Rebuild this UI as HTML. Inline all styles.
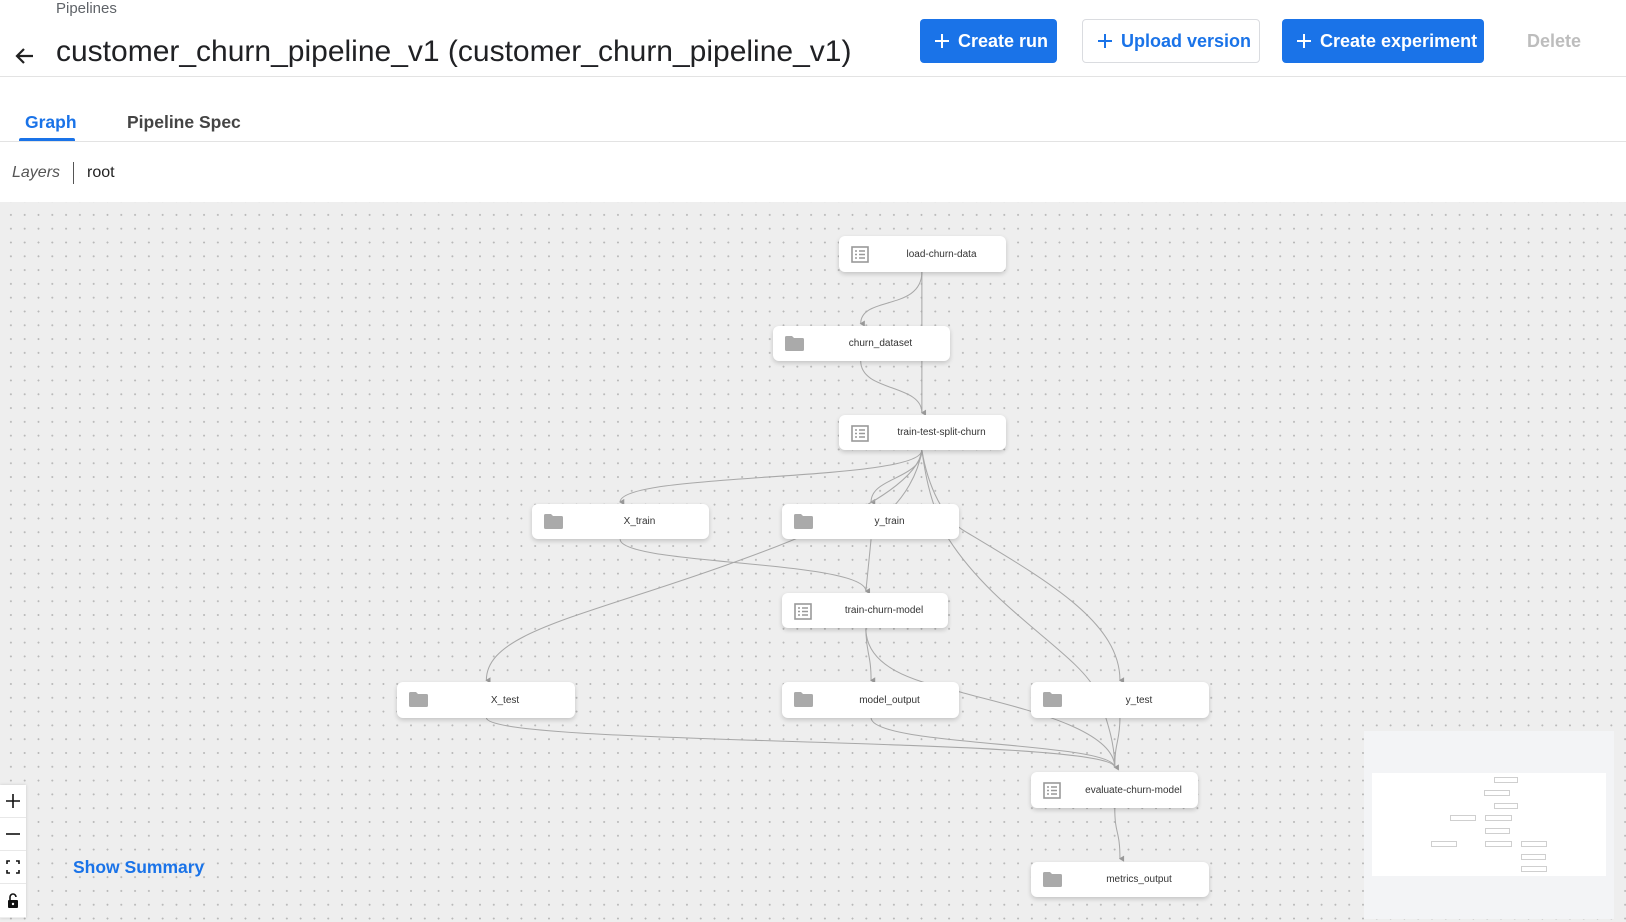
<!DOCTYPE html>
<html><head><meta charset="utf-8"><style>
*{box-sizing:border-box;margin:0;padding:0}
body{width:1626px;height:922px;overflow:hidden;background:#fff;font-family:"Liberation Sans",Arial,sans-serif;position:relative}
.abs{position:absolute}
.btn{position:absolute;top:19px;height:44px;border-radius:4px;font-weight:bold;font-size:18px;display:flex;align-items:center;padding-left:14px;gap:8px}
.blue{background:#1a73e8;color:#fff}
.out{border:1px solid #dadce0;color:#1a73e8;background:#fff}
.canvas{position:absolute;left:0;top:202px;width:1626px;height:720px;background-color:#eeeeee;background-image:radial-gradient(circle,#b8b8b8 0.8px,transparent 1.1px);background-size:13.8px 13.8px;background-position:4px 6px}
.node{position:absolute;background:#fff;border-radius:6px;box-shadow:0 2px 5px rgba(0,0,0,.18);font-size:10px;color:#333;display:flex;align-items:center}
.node .t{position:absolute;left:44px;right:6px;text-align:center}
.ic{position:absolute;left:12px;top:10px}
.ctl{position:absolute;left:0;width:26px;height:33px;background:#fff;border-bottom:1px solid #e8e8e8;display:flex;align-items:center;justify-content:center}
.mm{position:absolute;border:1.5px solid #cfcfcf;background:#fff}
</style></head><body>
<div class="abs" style="left:56px;top:0px;font-size:15px;color:#5f6368">Pipelines</div>
<svg class="abs" style="left:13px;top:44px" width="24" height="24" viewBox="0 0 24 24"><path d="M20 12H5M11 5l-7 7 7 7" fill="none" stroke="#222" stroke-width="2.2"/></svg>
<div class="abs" style="left:56px;top:35px;font-size:30px;color:#202124">customer_churn_pipeline_v1 (customer_churn_pipeline_v1)</div>
<div class="btn blue" style="left:920px;width:137px">
<svg width="16" height="16"><path d="M8 1v14M1 8h14" stroke="#fff" stroke-width="2"/></svg>Create run</div>
<div class="btn out" style="left:1082px;width:178px">
<svg width="16" height="16"><path d="M8 1v14M1 8h14" stroke="#1a73e8" stroke-width="2"/></svg>Upload version</div>
<div class="btn blue" style="left:1282px;width:202px">
<svg width="16" height="16"><path d="M8 1v14M1 8h14" stroke="#fff" stroke-width="2"/></svg>Create experiment</div>
<div class="abs" style="left:1527px;top:31px;font-size:18px;font-weight:bold;color:#bdbdbd">Delete</div>
<div class="abs" style="left:0;top:76px;width:1626px;height:1px;background:#e3e3e3"></div>
<div class="abs" style="left:25px;top:112px;font-size:17.5px;font-weight:bold;color:#1a73e8">Graph</div>
<div class="abs" style="left:127px;top:112px;font-size:17.5px;font-weight:bold;color:#444">Pipeline Spec</div>
<div class="abs" style="left:19px;top:138px;width:56px;height:3px;background:#1a73e8;border-radius:2px 2px 0 0"></div>
<div class="abs" style="left:0;top:141px;width:1626px;height:1px;background:#e3e3e3"></div>
<div class="abs" style="left:12px;top:164px;font-size:16px;font-style:italic;color:#555">Layers</div>
<div class="abs" style="left:73px;top:162px;width:1px;height:22px;background:#555"></div>
<div class="abs" style="left:87px;top:164px;font-size:16px;color:#222">root</div>

<div class="canvas"></div>
<svg class="abs" style="left:0;top:0" width="1626" height="922" viewBox="0 0 1568 889">
<defs><marker id="a" markerWidth="6" markerHeight="6" refX="3" refY="5" orient="auto-start-reverse" markerUnits="userSpaceOnUse"><path d="M0,1 L6,1 L3,6z" fill="#999"/></marker></defs>
<g fill="none" stroke="#a8a8a8" stroke-width="1">
<path d="M889,262 C889,300 830,285 830,312" marker-end="url(#a)"/>
<path d="M889,262 L889,398" marker-end="url(#a)"/>
<path d="M830,348 C830,378 889,370 889,398"/>
<path d="M889,434 C889,465 598,455 598,484" marker-end="url(#a)"/>
<path d="M889,434 C889,462 840,460 840,484" marker-end="url(#a)"/>
<path d="M889,434 C885,470 800,510 700,545 C560,595 469,610 469,656" marker-end="url(#a)"/>
<path d="M889,434 C895,470 910,500 930,512 C1010,560 1080,600 1080,656" marker-end="url(#a)"/>
<path d="M889,434 C895,480 905,500 915,520 C960,590 1040,630 1058,668 C1070,700 1075,720 1075,740" marker-end="url(#a)"/>
<path d="M889,434 C885,460 870,480 860,490"/>
<path d="M598,520 C598,545 835,540 835,570" marker-end="url(#a)"/>
<path d="M840,520 L835,570"/>
<path d="M835,606 C835,630 840,630 840,656" marker-end="url(#a)"/>
<path d="M835,606 C835,650 900,660 925,667 C970,680 1075,700 1075,740"/>
<path d="M469,692 C469,720 1075,710 1075,740"/>
<path d="M840,692 C840,720 1075,715 1075,740"/>
<path d="M1080,692 C1080,715 1075,715 1075,740"/>
<path d="M1075,779 C1075,805 1080,800 1080,828" marker-end="url(#a)"/>
</g></svg>

<div class="node" style="left:839px;top:236px;width:167px;height:36px"><svg class="ic" width="18" height="17" viewBox="0 0 18 17"><rect x="1" y="1" width="16" height="15" fill="none" stroke="#999" stroke-width="1.6"/><path d="M4 5h2M8 5h6M4 8.5h2M8 8.5h6M4 12h2M8 12h6" stroke="#999" stroke-width="1.4"/></svg><span class="t">load-churn-data</span></div>
<div class="node" style="left:773px;top:326px;width:177px;height:35px"><svg class="ic" width="19" height="15" viewBox="0 0 19 15"><path d="M0 1.5Q0 0 1.5 0H7l2 2h8.5Q19 2 19 3.5V13.5Q19 15 17.5 15H1.5Q0 15 0 13.5z" fill="#aaa"/></svg><span class="t">churn_dataset</span></div>
<div class="node" style="left:839px;top:415px;width:167px;height:35px"><svg class="ic" width="18" height="17" viewBox="0 0 18 17"><rect x="1" y="1" width="16" height="15" fill="none" stroke="#999" stroke-width="1.6"/><path d="M4 5h2M8 5h6M4 8.5h2M8 8.5h6M4 12h2M8 12h6" stroke="#999" stroke-width="1.4"/></svg><span class="t">train-test-split-churn</span></div>
<div class="node" style="left:532px;top:504px;width:177px;height:35px"><svg class="ic" width="19" height="15" viewBox="0 0 19 15"><path d="M0 1.5Q0 0 1.5 0H7l2 2h8.5Q19 2 19 3.5V13.5Q19 15 17.5 15H1.5Q0 15 0 13.5z" fill="#aaa"/></svg><span class="t">X_train</span></div>
<div class="node" style="left:782px;top:504px;width:177px;height:35px"><svg class="ic" width="19" height="15" viewBox="0 0 19 15"><path d="M0 1.5Q0 0 1.5 0H7l2 2h8.5Q19 2 19 3.5V13.5Q19 15 17.5 15H1.5Q0 15 0 13.5z" fill="#aaa"/></svg><span class="t">y_train</span></div>
<div class="node" style="left:782px;top:593px;width:166px;height:35px"><svg class="ic" width="18" height="17" viewBox="0 0 18 17"><rect x="1" y="1" width="16" height="15" fill="none" stroke="#999" stroke-width="1.6"/><path d="M4 5h2M8 5h6M4 8.5h2M8 8.5h6M4 12h2M8 12h6" stroke="#999" stroke-width="1.4"/></svg><span class="t">train-churn-model</span></div>
<div class="node" style="left:397px;top:682px;width:178px;height:36px"><svg class="ic" width="19" height="15" viewBox="0 0 19 15"><path d="M0 1.5Q0 0 1.5 0H7l2 2h8.5Q19 2 19 3.5V13.5Q19 15 17.5 15H1.5Q0 15 0 13.5z" fill="#aaa"/></svg><span class="t">X_test</span></div>
<div class="node" style="left:782px;top:682px;width:177px;height:36px"><svg class="ic" width="19" height="15" viewBox="0 0 19 15"><path d="M0 1.5Q0 0 1.5 0H7l2 2h8.5Q19 2 19 3.5V13.5Q19 15 17.5 15H1.5Q0 15 0 13.5z" fill="#aaa"/></svg><span class="t">model_output</span></div>
<div class="node" style="left:1031px;top:682px;width:178px;height:36px"><svg class="ic" width="19" height="15" viewBox="0 0 19 15"><path d="M0 1.5Q0 0 1.5 0H7l2 2h8.5Q19 2 19 3.5V13.5Q19 15 17.5 15H1.5Q0 15 0 13.5z" fill="#aaa"/></svg><span class="t">y_test</span></div>
<div class="node" style="left:1031px;top:772px;width:167px;height:36px"><svg class="ic" width="18" height="17" viewBox="0 0 18 17"><rect x="1" y="1" width="16" height="15" fill="none" stroke="#999" stroke-width="1.6"/><path d="M4 5h2M8 5h6M4 8.5h2M8 8.5h6M4 12h2M8 12h6" stroke="#999" stroke-width="1.4"/></svg><span class="t">evaluate-churn-model</span></div>
<div class="node" style="left:1031px;top:862px;width:178px;height:35px"><svg class="ic" width="19" height="15" viewBox="0 0 19 15"><path d="M0 1.5Q0 0 1.5 0H7l2 2h8.5Q19 2 19 3.5V13.5Q19 15 17.5 15H1.5Q0 15 0 13.5z" fill="#aaa"/></svg><span class="t">metrics_output</span></div>

<div class="abs" style="left:0;top:785px;width:26px;height:133px;box-shadow:0 0 3px rgba(0,0,0,.15)">
<div class="ctl" style="top:0"><svg width="16" height="16"><path d="M8 1v14M1 8h14" stroke="#111" stroke-width="1.6"/></svg></div>
<div class="ctl" style="top:33px"><svg width="16" height="16"><path d="M1 8h14" stroke="#111" stroke-width="1.6"/></svg></div>
<div class="ctl" style="top:66px"><svg width="14" height="14"><path d="M1 4V1h3M10 1h3v3M13 10v3h-3M4 13H1v-3" fill="none" stroke="#111" stroke-width="1.6"/></svg></div>
<div class="ctl" style="top:99px;border:none"><svg width="12" height="16"><path d="M3 7V4a3 3 0 0 1 6 0" fill="none" stroke="#111" stroke-width="1.6"/><rect x="1" y="7" width="10" height="8" rx="1" fill="#111"/><circle cx="6" cy="11" r="1.2" fill="#fff"/></svg></div>
</div>
<div class="abs" style="left:73px;top:857px;font-size:17.5px;font-weight:bold;color:#1a73e8">Show Summary</div>

<div class="abs" style="left:1364px;top:731px;width:250px;height:188px;background:#f3f4f6"></div>
<div class="abs" style="left:1372px;top:773px;width:234px;height:103px;background:#fff"></div>
<div class="mm" style="left:1494px;top:777px;width:24px;height:6px"></div>
<div class="mm" style="left:1484px;top:790px;width:26px;height:6px"></div>
<div class="mm" style="left:1494px;top:803px;width:24px;height:6px"></div>
<div class="mm" style="left:1450px;top:815px;width:26px;height:6px"></div>
<div class="mm" style="left:1485px;top:815px;width:27px;height:6px"></div>
<div class="mm" style="left:1485px;top:828px;width:25px;height:6px"></div>
<div class="mm" style="left:1431px;top:841px;width:26px;height:6px"></div>
<div class="mm" style="left:1485px;top:841px;width:27px;height:6px"></div>
<div class="mm" style="left:1521px;top:841px;width:26px;height:6px"></div>
<div class="mm" style="left:1521px;top:854px;width:25px;height:6px"></div>
<div class="mm" style="left:1521px;top:866px;width:26px;height:6px"></div>
</body></html>
